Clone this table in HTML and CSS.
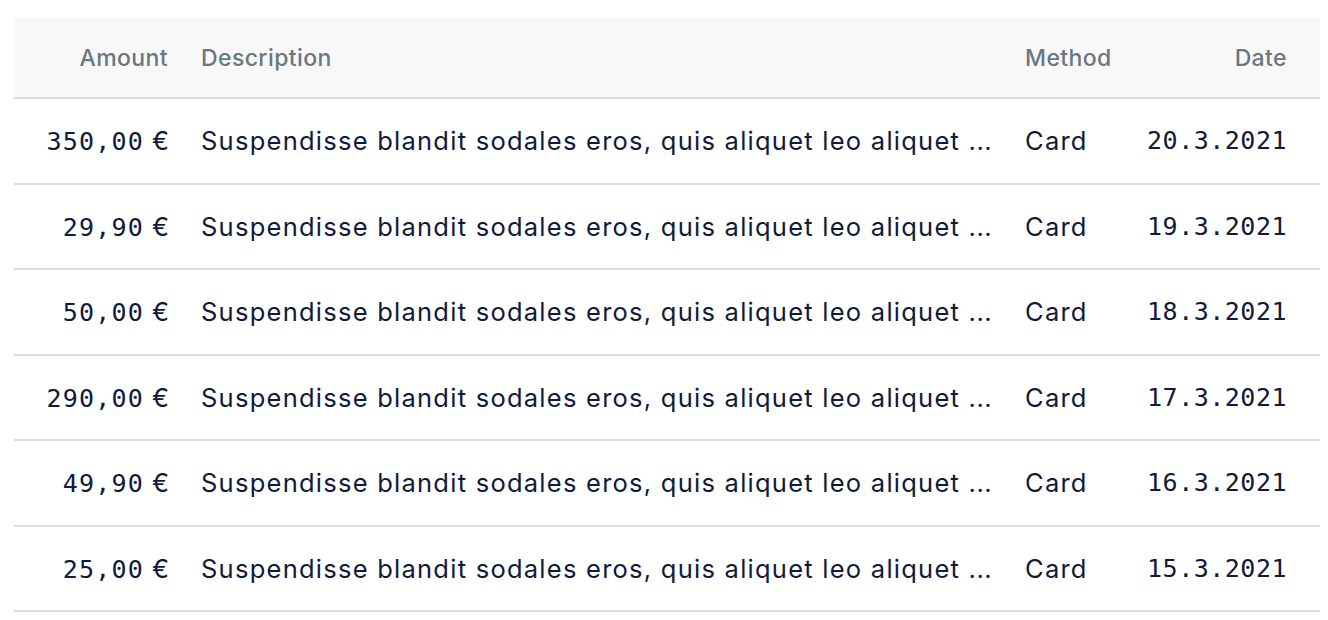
FILE: index.html
```html
<!DOCTYPE html>
<html lang="en">
<head>
    <meta charset="UTF-8">
    <meta name="viewport" content="width=device-width, initial-scale=1.0">
    <title>Payments</title>
    <link rel="stylesheet" href="styles.css">
</head>
<body>
    <table class="payments">
        <colgroup>
            <col class="col-amount">
            <col class="col-desc">
            <col class="col-method">
            <col class="col-date">
        </colgroup>
        <thead>
            <tr>
                <th class="num">Amount</th>
                <th>Description</th>
                <th>Method</th>
                <th class="num date">Date</th>
            </tr>
        </thead>
        <tbody>
            <tr>
                <td class="num"><span class="mono amount">350,00</span><span class="cur">€</span></td>
                <td class="desc">Suspendisse blandit sodales eros, quis aliquet leo aliquet <span class="dots">...</span></td>
                <td>Card</td>
                <td class="num date mono">20.3.2021</td>
            </tr>
            <tr>
                <td class="num"><span class="mono amount">29,90</span><span class="cur">€</span></td>
                <td class="desc">Suspendisse blandit sodales eros, quis aliquet leo aliquet <span class="dots">...</span></td>
                <td>Card</td>
                <td class="num date mono">19.3.2021</td>
            </tr>
            <tr>
                <td class="num"><span class="mono amount">50,00</span><span class="cur">€</span></td>
                <td class="desc">Suspendisse blandit sodales eros, quis aliquet leo aliquet <span class="dots">...</span></td>
                <td>Card</td>
                <td class="num date mono">18.3.2021</td>
            </tr>
            <tr>
                <td class="num"><span class="mono amount">290,00</span><span class="cur">€</span></td>
                <td class="desc">Suspendisse blandit sodales eros, quis aliquet leo aliquet <span class="dots">...</span></td>
                <td>Card</td>
                <td class="num date mono">17.3.2021</td>
            </tr>
            <tr>
                <td class="num"><span class="mono amount">49,90</span><span class="cur">€</span></td>
                <td class="desc">Suspendisse blandit sodales eros, quis aliquet leo aliquet <span class="dots">...</span></td>
                <td>Card</td>
                <td class="num date mono">16.3.2021</td>
            </tr>
            <tr>
                <td class="num"><span class="mono amount">25,00</span><span class="cur">€</span></td>
                <td class="desc">Suspendisse blandit sodales eros, quis aliquet leo aliquet <span class="dots">...</span></td>
                <td>Card</td>
                <td class="num date mono">15.3.2021</td>
            </tr>
        </tbody>
    </table>
</body>
</html>
```

FILE: styles.css
```css
body {
    margin: 0;
    padding: 18px 8px 0 14px;
    background: #fff;
    font-family: Inter, "Noto Sans", sans-serif;
    color: #0f1a3c;
}
.payments {
    width: 1306px;
    border-collapse: collapse;
    table-layout: fixed;
    font-size: 25.5px;
    letter-spacing: 1.25px;
}
.col-amount { width: 171px; }
.col-desc { width: 824px; }
.col-method { width: 121px; }
.col-date { width: 190px; }
th {
    background: #f8f8f8;
    color: #687780;
    font-weight: 500;
    font-size: 23px;
    letter-spacing: 0.4px;
    text-align: left;
    height: 79px;
    padding: 0 16px;
    border-bottom: 2px solid #dcdcdc;
}
td {
    height: 83.5px;
    padding: 0 16px;
    border-bottom: 2px solid #dcdcdc;
    white-space: nowrap;
}
.num {
    text-align: right;
}
th.num {
    padding-right: 17px;
}
.date {
    padding-right: 33px;
}
th.date {
    padding-right: 33px;
}
.desc {
    overflow: hidden;
}
.dots {
    letter-spacing: 0.5px;
}
.mono {
    font-family: "DejaVu Sans Mono", monospace;
    font-size: 25px;
    letter-spacing: 0.5px;
}
.amount {
    letter-spacing: 1.2px;
}
.cur {
    margin-left: 8px;
    letter-spacing: 0;
}
```
